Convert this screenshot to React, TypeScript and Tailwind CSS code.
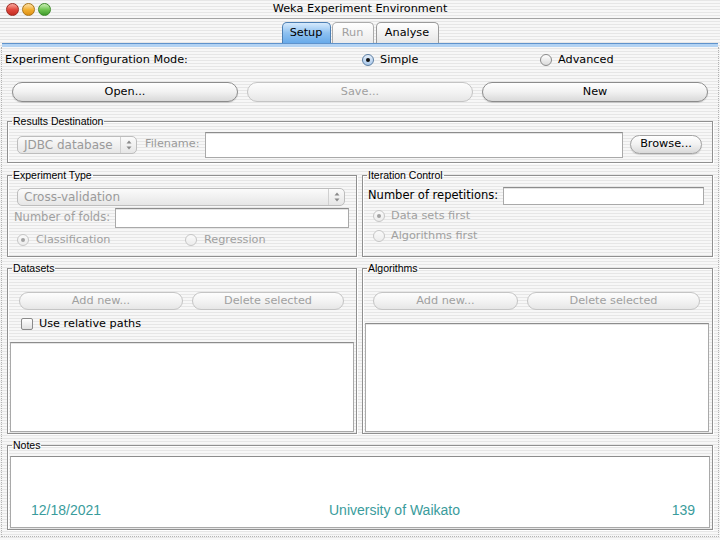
import React from "react"

const stripes =
  "bg-[repeating-linear-gradient(180deg,#e6e6e6_0px,#e6e6e6_1px,#f7f7f7_1px,#f7f7f7_3px)]"

function Radio({ checked, disabled, blue }: { checked?: boolean; disabled?: boolean; blue?: boolean }) {
  const ring = disabled
    ? "border-[#c6c6c6] bg-gradient-to-b from-[#fafafa] to-[#ececec]"
    : blue
      ? "border-[#5d7fa3] bg-gradient-to-b from-[#e4eefa] to-[#a9c8ea]"
      : "border-[#8a8a8a] bg-gradient-to-b from-white to-[#dadada]"
  return (
    <span className={`flex h-[12px] w-[12px] shrink-0 items-center justify-center rounded-full border ${ring}`}>
      {checked && <span className={`h-[4px] w-[4px] rounded-full ${disabled ? "bg-[#a2a2a2]" : "bg-[#111]"}`} />}
    </span>
  )
}

function AquaButton({ label, disabled, className = "" }: { label: string; disabled?: boolean; className?: string }) {
  const look = disabled
    ? "border-[#c4c4c4] text-[#a0a0a0] from-[#fdfdfd] via-[#f3f3f3] to-[#e6e6e6]"
    : "border-[#8c8c8c] text-black from-white via-[#f1f1f1] to-[#d9d9d9] shadow-[0_1px_1px_rgba(0,0,0,0.15)]"
  return (
    <div className={`flex items-center justify-center rounded-full border bg-gradient-to-b ${look} ${className}`}>
      {label}
    </div>
  )
}

function Stepper() {
  return (
    <svg width="6" height="10" viewBox="0 0 6 10" className="shrink-0">
      <path d="M3 0.5 L5.5 3.5 L0.5 3.5 Z" fill="#8a8a8a" />
      <path d="M3 9.5 L5.5 6.5 L0.5 6.5 Z" fill="#8a8a8a" />
    </svg>
  )
}

function Combo({ label, className = "" }: { label: string; className?: string }) {
  return (
    <div
      className={`flex items-center rounded-[5px] border border-[#bdbdbd] bg-gradient-to-b from-[#fbfbfb] to-[#e6e6e6] text-[12px] text-[#9a9a9a] ${className}`}
    >
      <span className="flex-1 truncate pl-[6px]">{label}</span>
      <span className="flex h-full w-[16px] items-center justify-center border-l border-[#d0d0d0]">
        <Stepper />
      </span>
    </div>
  )
}

function TextBox({ className = "" }: { className?: string }) {
  return (
    <div className={`border border-[#a9a9a9] border-t-[#8c8c8c] bg-white shadow-[inset_0_1px_0_#e4e4e4] ${className}`} />
  )
}

function Group({ title, className = "", children }: { title: string; className?: string; children: React.ReactNode }) {
  return (
    <fieldset className={`min-w-0 border border-[#8f8f8f] shadow-[inset_1px_1px_0_#ffffff,1px_1px_0_#ffffff] ${className}`}>
      <legend className="ml-[4px] px-[1px] font-['Liberation_Sans',Arial,sans-serif] text-[10.5px] leading-[12px] text-black">
        {title}
      </legend>
      {children}
    </fieldset>
  )
}

export default function App() {
  return (
    <div
      className={`h-[540px] w-[720px] overflow-hidden ${stripes} font-['DejaVu_Sans',sans-serif] text-[11.25px] text-black`}
    >
      {/* title bar */}
      <div className="grid h-[19px] grid-cols-[1fr_auto_1fr] items-center border-b border-[#a3a3a3]">
        <div className="flex gap-[3px] pl-[6px]">
          <span className="h-[13px] w-[13px] rounded-full border border-[#9c2a22] bg-gradient-to-b from-[#f7a49b] via-[#e2473d] to-[#c42d22]" />
          <span className="h-[13px] w-[13px] rounded-full border border-[#a8741a] bg-gradient-to-b from-[#fde1a0] via-[#f3b132] to-[#dd8f10]" />
          <span className="h-[13px] w-[13px] rounded-full border border-[#3f8a2b] bg-gradient-to-b from-[#c9efb3] via-[#72c653] to-[#3d9a2a]" />
        </div>
        <div className="text-center leading-[18px]">Weka Experiment Environment</div>
        <div />
      </div>

      {/* tabs */}
      <div className="flex h-[24px] items-end justify-center gap-[1px]">
        <div className="flex h-[21px] w-[49px] items-center justify-center rounded-t-[5px] border border-b-0 border-[#4d7fb3] bg-gradient-to-b from-[#d6eafc] via-[#8ec1f0] to-[#67aaea]">
          Setup
        </div>
        <div className="flex h-[21px] w-[42px] items-center justify-center rounded-t-[5px] border border-b-0 border-[#ababab] bg-gradient-to-b from-white to-[#ebebeb] text-[#a0a0a0]">
          Run
        </div>
        <div className="ml-[1px] flex h-[21px] w-[63px] items-center justify-center rounded-t-[5px] border border-b-0 border-[#9a9a9a] bg-gradient-to-b from-white to-[#e6e6e6]">
          Analyse
        </div>
      </div>
      <div className="mx-[2px] h-[4px] border-t border-[#5f93cc] bg-[#b3d3f3]" />

      {/* pane */}
      <div className="mx-[1px] flex h-[490px] flex-col border-x border-b border-dotted border-[#b3b3b3]">
        <div className="flex h-[26px] items-center pl-[3px]">
          <span className="w-[357px]">Experiment Configuration Mode:</span>
          <span className="flex w-[178px] items-center gap-[6px]">
            <Radio checked blue />
            Simple
          </span>
          <span className="flex items-center gap-[6px]">
            <Radio />
            Advanced
          </span>
        </div>

        <div className="mt-[9px] grid grid-cols-3 gap-[9px] px-[10px]">
          <AquaButton label="Open..." className="h-[20px]" />
          <AquaButton label="Save..." disabled className="h-[20px]" />
          <AquaButton label="New" className="h-[20px]" />
        </div>

        <div className="flex flex-col px-[5px]">
          <Group title="Results Destination" className="mt-[13px]">
            <div className="flex h-[35px] items-center pl-[9px] pr-[10px]">
              <Combo label="JDBC database" className="h-[18px] w-[120px]" />
              <span className="ml-[8px] w-[60px] text-[#9a9a9a]">Filename:</span>
              <TextBox className="h-[26px] flex-1" />
              <AquaButton label="Browse..." className="ml-[7px] h-[19px] w-[72px] border-[#a2a2a2] text-[#444]" />
            </div>
          </Group>

          <div className="mt-[6px] grid grid-cols-[350px_1fr] gap-[5px]">
            <Group title="Experiment Type">
              <div className="flex h-[75px] flex-col pt-[7px]">
                <Combo label="Cross-validation" className="ml-[9px] mr-[11px] h-[18px]" />
                <div className="mt-[2px] flex h-[20px] items-center pl-[6px] pr-[7px]">
                  <span className="w-[101px] text-[11.5px] text-[#a0a0a0]">Number of folds:</span>
                  <TextBox className="h-[20px] flex-1" />
                </div>
                <div className="mt-[5px] flex h-[14px] items-center pl-[9px] text-[#a0a0a0]">
                  <span className="flex w-[168px] items-center gap-[7px]">
                    <Radio checked disabled />
                    Classification
                  </span>
                  <span className="flex items-center gap-[7px]">
                    <Radio disabled />
                    Regression
                  </span>
                </div>
              </div>
            </Group>
            <Group title="Iteration Control">
              <div className="flex h-[75px] flex-col pt-[6px]">
                <div className="flex h-[18px] items-center pl-[5px] pr-[8px]">
                  <span className="w-[135px] text-[11.5px]">Number of repetitions:</span>
                  <TextBox className="h-[18px] flex-1" />
                </div>
                <div className="mt-[3px] flex h-[16px] items-center gap-[6px] pl-[10px] text-[#a0a0a0]">
                  <Radio checked disabled />
                  Data sets first
                </div>
                <div className="mt-[4px] flex h-[16px] items-center gap-[6px] pl-[10px] text-[#a0a0a0]">
                  <Radio disabled />
                  Algorithms first
                </div>
              </div>
            </Group>
          </div>

          <div className="mt-[5px] grid grid-cols-[350px_1fr] gap-[5px]">
            <Group title="Datasets">
              <div className="flex h-[159px] flex-col pt-[18px]">
                <div className="flex gap-[9px] pl-[11px]">
                  <AquaButton label="Add new..." disabled className="h-[18px] w-[164px]" />
                  <AquaButton label="Delete selected" disabled className="h-[18px] w-[152px]" />
                </div>
                <div className="mt-[8px] flex h-[12px] items-center gap-[6px] pl-[13px]">
                  <span className="h-[12px] w-[12px] rounded-[2px] border border-[#8a8a8a] bg-gradient-to-b from-white to-[#e0e0e0]" />
                  Use relative paths
                </div>
                <TextBox className="mx-[2px] mb-[1px] mt-[12px] flex-1" />
              </div>
            </Group>
            <Group title="Algorithms">
              <div className="flex h-[159px] flex-col pt-[18px]">
                <div className="flex gap-[9px] pl-[10px]">
                  <AquaButton label="Add new..." disabled className="h-[18px] w-[145px]" />
                  <AquaButton label="Delete selected" disabled className="h-[18px] w-[173px]" />
                </div>
                <TextBox className="mb-[1px] ml-[2px] mr-[3px] mt-[13px] flex-1" />
              </div>
            </Group>
          </div>

          <Group title="Notes" className="mt-[5px]">
            <div className="flex h-[78px] flex-col pt-[5px]">
              <div className="mx-[2px] mb-[1px] flex flex-1 items-end border border-[#a9a9a9] border-t-[#8c8c8c] bg-white pb-[9px] font-['Liberation_Sans',Arial,sans-serif] text-[14px] leading-[16px] text-[#3a9c9c]">
                <span className="w-[318px] pl-[20px]">12/18/2021</span>
                <span>University of Waikato</span>
                <span className="flex-1" />
                <span className="pr-[14px]">139</span>
              </div>
            </div>
          </Group>
        </div>
      </div>
    </div>
  )
}
